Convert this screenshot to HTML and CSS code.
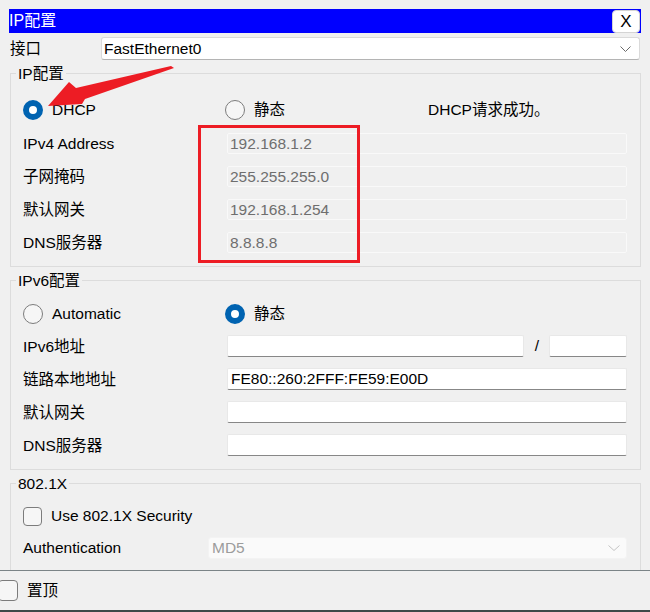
FILE: index.html
```html
<!DOCTYPE html>
<html lang="zh-CN">
<head>
<meta charset="utf-8">
<title>IP配置</title>
<link rel="stylesheet" href="styles.css">
</head>
<body>
<div class="panel">
  <div class="titlebar">
    <span class="title">IP<span class="zh">配置</span></span>
    <button class="close" type="button">X</button>
  </div>

  <div class="iface-row">
    <span class="iface-label"><span class="zh">接口</span></span>
    <div class="select">
      <span>FastEthernet0</span>
      <svg class="chev" width="11" height="6" viewBox="0 0 11 6"><path d="M0.5 0.5 L5.5 5.5 L10.5 0.5" fill="none" stroke="#6a6a6a" stroke-width="1"/></svg>
    </div>
  </div>

  <fieldset class="group g-ipv4">
    <legend>IP<span class="zh">配置</span></legend>
    <div class="group-body">
      <div class="radio-row">
        <div class="radio-opt opt-a"><span class="radio checked"></span><span>DHCP</span></div>
        <div class="radio-opt opt-b"><span class="radio"></span><span><span class="zh">静态</span></span></div>
        <span class="status">DHCP<span class="zh">请求成功。</span></span>
      </div>
      <div class="field-row"><span class="flabel">IPv4 Address</span><div class="input disabled">192.168.1.2</div></div>
      <div class="field-row"><span class="flabel"><span class="zh">子网掩码</span></span><div class="input disabled">255.255.255.0</div></div>
      <div class="field-row"><span class="flabel"><span class="zh">默认网关</span></span><div class="input disabled">192.168.1.254</div></div>
      <div class="field-row"><span class="flabel">DNS<span class="zh">服务器</span></span><div class="input disabled">8.8.8.8</div></div>
    </div>
  </fieldset>

  <fieldset class="group g-ipv6">
    <legend>IPv6<span class="zh">配置</span></legend>
    <div class="group-body">
      <div class="radio-row">
        <div class="radio-opt opt-a"><span class="radio"></span><span>Automatic</span></div>
        <div class="radio-opt opt-b"><span class="radio checked"></span><span><span class="zh">静态</span></span></div>
      </div>
      <div class="field-row six"><span class="flabel">IPv6<span class="zh">地址</span></span><div class="input"></div><span class="slash">/</span><div class="input prefix"></div></div>
      <div class="field-row six"><span class="flabel"><span class="zh">链路本地地址</span></span><div class="input">FE80::260:2FFF:FE59:E00D</div></div>
      <div class="field-row six"><span class="flabel"><span class="zh">默认网关</span></span><div class="input"></div></div>
      <div class="field-row six"><span class="flabel">DNS<span class="zh">服务器</span></span><div class="input"></div></div>
    </div>
  </fieldset>

  <fieldset class="group g-8021x">
    <legend>802.1X</legend>
    <div class="group-body">
      <div class="check-row"><span class="checkbox"></span><span>Use 802.1X Security</span></div>
      <div class="field-row six auth-row"><span class="flabel auth">Authentication</span>
        <div class="select disabled-select">
          <span>MD5</span>
          <svg class="chev" width="12" height="6" viewBox="0 0 12 6"><path d="M0.5 0.5 L6 5.5 L11.5 0.5" fill="none" stroke="#c4c4c4" stroke-width="1"/></svg>
        </div>
      </div>
    </div>
  </fieldset>
</div>

<div class="footer">
  <span class="checkbox foot-check"></span><span><span class="zh">置顶</span></span>
</div>
<div class="strip"></div>

<div class="callout-box"></div>
<svg class="callout-arrow" width="140" height="55" viewBox="0 0 140 55">
  <polygon points="8,46 29,22 36,28 131,6 134,8 45,39 42,44" fill="#ed1c24"/>
</svg>
</body>
</html>
```

FILE: styles.css
```css
html, body {
  margin: 0;
  padding: 0;
}

body {
  width: 650px;
  height: 612px;
  overflow: hidden;
  position: relative;
  background: #f0f0f0;
  color: #000;
  font-family: "Liberation Sans", "Noto Sans CJK SC", sans-serif;
  font-size: 15.5px;
}

/* CJK runs: keep the line box of the Latin font */
.zh {
  font-family: "Noto Sans CJK SC", sans-serif;
  line-height: 0;
}

.panel {
  height: 570px;
  box-sizing: border-box;
  padding-top: 9px;
  overflow: hidden;
}

/* title bar */
.titlebar {
  height: 24px;
  margin: 0 9px;
  background: #0000ff;
  display: flex;
  justify-content: space-between;
  align-items: center;
}

.title {
  color: #fff;
  font-size: 16px;
  line-height: 24px;
}

.close {
  align-self: flex-end;
  width: 28px;
  height: 23px;
  margin: 0 1px 0 0;
  padding: 0;
  box-sizing: border-box;
  background: #fff;
  border: 1px solid #d4d4d4;
  border-radius: 4px;
  font-family: "Liberation Sans", sans-serif;
  font-size: 17px;
  line-height: 21px;
  color: #000;
}

/* interface row */
.iface-row {
  display: flex;
  align-items: center;
  height: 23px;
  margin: 4px 10px 0 10px;
}

.iface-label {
  width: 91px;
  flex: none;
}

.select {
  flex: 1;
  height: 23px;
  box-sizing: border-box;
  background: #fff;
  border: 1px solid #dadada;
  border-bottom-color: #b4b4b4;
  border-radius: 3px;
  display: flex;
  align-items: center;
  justify-content: space-between;
  padding: 0 8px 0 2px;
}

.chev {
  display: block;
}

/* group boxes */
.group {
  margin: 3px 9px 0 10px;
  padding: 0;
  border: 1px solid #dcdcdc;
  min-width: 0;
}

.group legend {
  margin-left: 5px;
  padding: 0 2px;
  line-height: 21px;
}

.group-body {
  display: flex;
  flex-direction: column;
  padding: 0 13px 0 12px;
}

.g-ipv4 .group-body {
  padding-top: 14px;
  padding-bottom: 13px;
  gap: 12px;
}

.g-ipv4 .radio-row {
  margin-bottom: -1px;
}

.g-ipv6 .group-body {
  padding-top: 11px;
  padding-bottom: 13px;
  gap: 11px;
}

.g-ipv6 .radio-row {
  margin-bottom: -2px;
}

.g-8021x .group-body {
  padding-top: 10px;
  padding-bottom: 20px;
  gap: 9px;
}

.radio-row {
  display: flex;
  align-items: center;
  height: 24px;
}

.radio-opt {
  display: flex;
  align-items: center;
  gap: 9px;
}

.opt-a {
  width: 202px;
}

.opt-b {
  width: 203px;
}

.radio {
  width: 20px;
  height: 20px;
  box-sizing: border-box;
  border-radius: 50%;
  border: 1px solid #7c7c7c;
  background: #f6f6f6;
  flex: none;
}

.radio.checked {
  border: 6px solid #0063b1;
  background: #fff;
}

.field-row {
  display: flex;
  align-items: center;
  height: 21px;
}

.field-row.six {
  height: 22px;
}

.flabel {
  width: 204px;
  flex: none;
}

.six .flabel {
  padding-top: 2px;
}

.auth-row .flabel {
  padding-top: 0;
}

.flabel.auth {
  width: 185px;
}

.input {
  flex: 1;
  height: 100%;
  box-sizing: border-box;
  background: #fff;
  border: 1px solid #e8e8e8;
  border-bottom: 1px solid #878787;
  border-radius: 2px;
  padding: 0 3px;
  display: flex;
  align-items: center;
  white-space: nowrap;
}

.input.disabled {
  background: #f0f0f0;
  border: 1px solid #f9f9f9;
  color: #6e6e6e;
  padding-left: 2px;
}

.input.prefix {
  flex: none;
  width: 78px;
}

.slash {
  width: 24px;
  text-align: center;
  flex: none;
  padding-left: 1px;
}

.check-row {
  display: flex;
  align-items: center;
  gap: 9px;
  height: 24px;
}

.checkbox {
  width: 19px;
  height: 19px;
  box-sizing: border-box;
  border: 1px solid #7c7c7c;
  border-radius: 4px;
  background: #f6f6f6;
  flex: none;
}

.select.disabled-select {
  height: 100%;
  background: #fafafa;
  border: 1px solid #f3f3f3;
  color: #9c9c9c;
  padding: 0 6px 0 3px;
}

/* footer */
.footer {
  height: 39px;
  border-top: 1px solid #7b8487;
  display: flex;
  align-items: center;
  gap: 9px;
}

.foot-check {
  width: 20px;
  height: 21px;
  margin-left: -2px;
}

.strip {
  height: 2px;
  background: #3d4949;
}

/* annotations drawn over the screenshot */
.callout-box {
  position: absolute;
  left: 198px;
  top: 125px;
  width: 162px;
  height: 138px;
  box-sizing: border-box;
  border: 3px solid #ed1c24;
}

.callout-arrow {
  position: absolute;
  left: 40px;
  top: 60px;
}
```
